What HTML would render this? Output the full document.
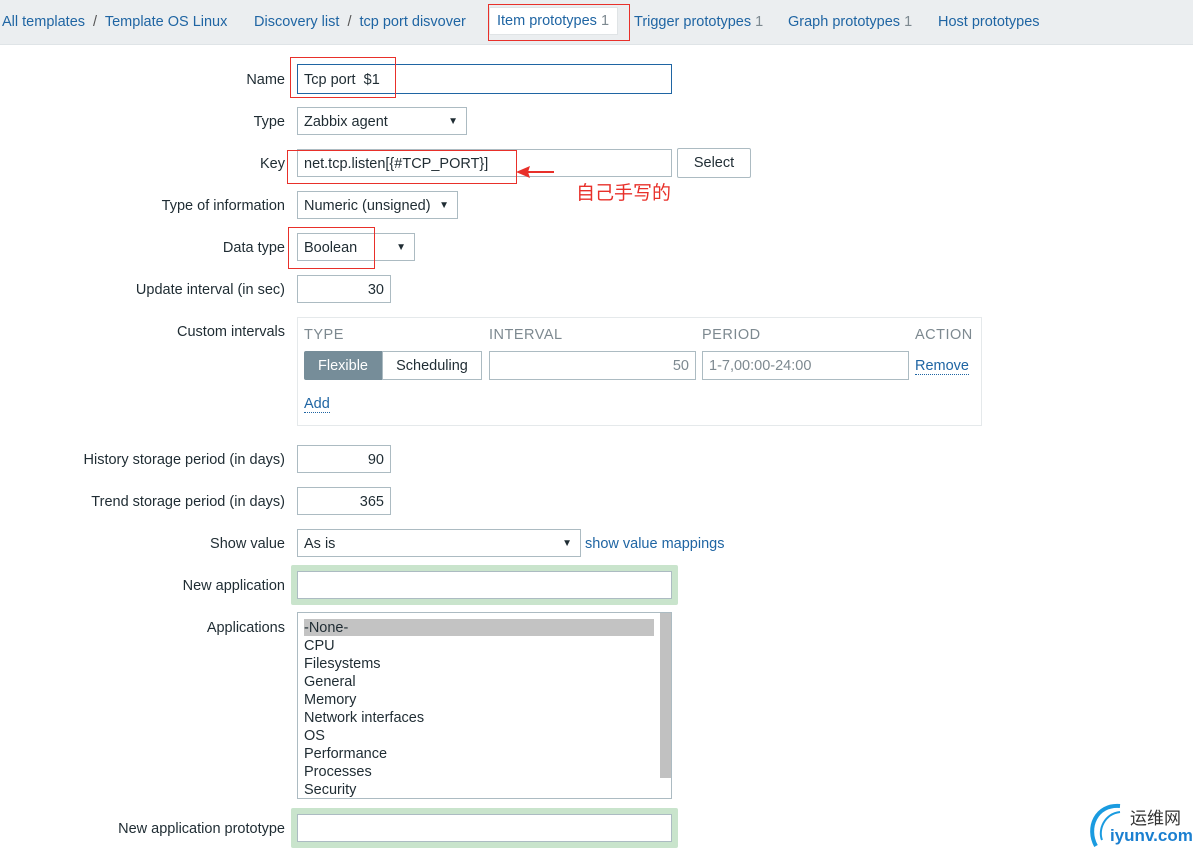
<!DOCTYPE html><html><head><meta charset="utf-8"><style>
body{margin:0;width:1193px;height:852px;background:#fff;font-family:"Liberation Sans",sans-serif;font-size:14.5px;color:#1f2c33;position:relative;overflow:hidden}
.a{position:absolute}
.hdr{left:0;top:0;width:1193px;height:44px;background:#ebeef0;border-bottom:1px solid #dfe4e7}
.lnk{color:#1f65a3}
.lbl{position:absolute;right:908px;white-space:nowrap;margin-top:2px}
.in{position:absolute;border:1px solid #acbbc2;background:#fff;box-sizing:border-box;height:28px;line-height:28px;padding:0 6px;white-space:nowrap}
.sel:after{content:"▼";position:absolute;right:8px;top:0;font-size:10px}
.red{position:absolute;border:1px solid #e8302a;box-sizing:border-box}
.glow{position:absolute;background:#c9e4cc;border-radius:2px}
.g{color:#7d8990}
</style></head><body>
<div class="a hdr"></div>
<div class="a" style="left:2px;top:14px"><span class="lnk">All templates</span> <span style="color:#555;margin:0 4px">/</span> <span class="lnk">Template OS Linux</span></div>
<div class="a" style="left:254px;top:14px"><span class="lnk">Discovery list</span> <span style="color:#555;margin:0 4px">/</span> <span class="lnk">tcp port disvover</span></div>
<div class="a" style="left:489px;top:7px;width:127px;height:26px;background:#fff;border:1px solid #e0e4e6"></div>
<div class="a" style="left:497px;top:13px;color:#1f65a3">Item prototypes <span class="g">1</span></div>
<div class="a" style="left:634px;top:14px;color:#1f65a3">Trigger prototypes <span class="g">1</span></div>
<div class="a" style="left:788px;top:14px;color:#1f65a3">Graph prototypes <span class="g">1</span></div>
<div class="a" style="left:938px;top:14px;color:#1f65a3">Host prototypes</div>

<div class="lbl" style="top:70px">Name</div>
<div class="in" style="left:297px;top:64px;width:375px;height:30px;border-color:#1f65a3;line-height:30px">Tcp port &nbsp;$1</div>
<div class="lbl" style="top:112px">Type</div>
<div class="in sel" style="left:297px;top:107px;width:170px">Zabbix agent</div>
<div class="lbl" style="top:154px">Key</div>
<div class="in" style="left:297px;top:149px;width:375px">net.tcp.listen[{#TCP_PORT}]</div>
<div class="in" style="left:677px;top:148px;width:74px;height:30px;text-align:center;line-height:28px;border-radius:2px">Select</div>
<div class="lbl" style="top:196px">Type of information</div>
<div class="in sel" style="left:297px;top:191px;width:161px">Numeric (unsigned)</div>
<div class="lbl" style="top:238px">Data type</div>
<div class="in sel" style="left:297px;top:233px;width:118px">Boolean</div>
<div class="lbl" style="top:280px">Update interval (in sec)</div>
<div class="in" style="left:297px;top:275px;width:94px;text-align:right">30</div>
<div class="lbl" style="top:322px">Custom intervals</div>
<div class="a" style="left:297px;top:317px;width:685px;height:109px;border:1px solid #e5e9eb;box-sizing:border-box"></div>
<div class="a g" style="left:304px;top:327px;letter-spacing:.5px">TYPE</div>
<div class="a g" style="left:489px;top:327px;letter-spacing:.5px">INTERVAL</div>
<div class="a g" style="left:702px;top:327px;letter-spacing:.5px">PERIOD</div>
<div class="a g" style="left:915px;top:327px;letter-spacing:.5px">ACTION</div>
<div class="a" style="left:304px;top:351px;width:78px;height:29px;background:#768d99;color:#fff;text-align:center;line-height:30px;border-radius:2px 0 0 2px">Flexible</div>
<div class="in" style="left:382px;top:351px;width:100px;height:29px;text-align:center">Scheduling</div>
<div class="in g" style="left:489px;top:351px;width:207px;height:29px;text-align:right">50</div>
<div class="in g" style="left:702px;top:351px;width:207px;height:29px">1-7,00:00-24:00</div>
<div class="a lnk" style="left:915px;top:358px;border-bottom:1px dotted #1f65a3;line-height:16px">Remove</div>
<div class="a lnk" style="left:304px;top:396px;border-bottom:1px dotted #1f65a3;line-height:16px">Add</div>
<div class="lbl" style="top:450px">History storage period (in days)</div>
<div class="in" style="left:297px;top:445px;width:94px;text-align:right">90</div>
<div class="lbl" style="top:492px">Trend storage period (in days)</div>
<div class="in" style="left:297px;top:487px;width:94px;text-align:right">365</div>
<div class="lbl" style="top:534px">Show value</div>
<div class="in sel" style="left:297px;top:529px;width:284px">As is</div>
<div class="a lnk" style="left:585px;top:536px">show value mappings</div>
<div class="lbl" style="top:576px">New application</div>
<div class="glow" style="left:291px;top:565px;width:387px;height:40px"></div>
<div class="in" style="left:297px;top:571px;width:375px"></div>
<div class="lbl" style="top:618px">Applications</div>
<div class="a" style="left:297px;top:612px;width:375px;height:187px;border:1px solid #acbbc2;box-sizing:border-box;overflow:hidden">
<div class="a" style="left:6px;top:6px;width:350px;height:17px;background:#c3c3c3"></div>
<div class="a" style="right:0;top:0;width:11px;height:165px;background:#c1c1c1"></div>
<div class="a" style="left:6px;top:6px;line-height:18px">-None-<br>CPU<br>Filesystems<br>General<br>Memory<br>Network interfaces<br>OS<br>Performance<br>Processes<br>Security</div>
</div>
<div class="lbl" style="top:819px">New application prototype</div>
<div class="glow" style="left:291px;top:808px;width:387px;height:40px"></div>
<div class="in" style="left:297px;top:814px;width:375px"></div>

<div class="red" style="left:488px;top:4px;width:142px;height:37px"></div>
<div class="red" style="left:290px;top:57px;width:106px;height:41px"></div>
<div class="red" style="left:287px;top:150px;width:230px;height:34px"></div>
<div class="red" style="left:288px;top:227px;width:87px;height:42px"></div>
<svg class="a" style="left:514px;top:164px" width="42" height="16"><path d="M40 8 L12 8" stroke="#e8302a" stroke-width="2"/><path d="M2 8 L16 2 L14 8 L16 14Z" fill="#e8302a"/></svg>
<div class="a" style="left:576px;top:178px;color:#e8302a;font-size:19px;font-family:'Liberation Sans','Noto Sans CJK SC',sans-serif">自己手写的</div>
<svg class="a" style="left:1086px;top:802px" width="44" height="48"><path d="M34 4 C10 2 0 26 10 44" stroke="#1a9be0" stroke-width="4" fill="none"/><path d="M34 10 C18 12 12 28 16 38" stroke="#1a9be0" stroke-width="2" fill="none"/></svg>
<div class="a" style="left:1130px;top:804px;font-size:17px;color:#333;font-family:'Liberation Sans','Noto Sans CJK SC',sans-serif">运维网</div>
<div class="a" style="left:1110px;top:826px;font-size:17px;font-weight:bold;color:#1a7fd0">iyunv.com</div>
</body></html>
